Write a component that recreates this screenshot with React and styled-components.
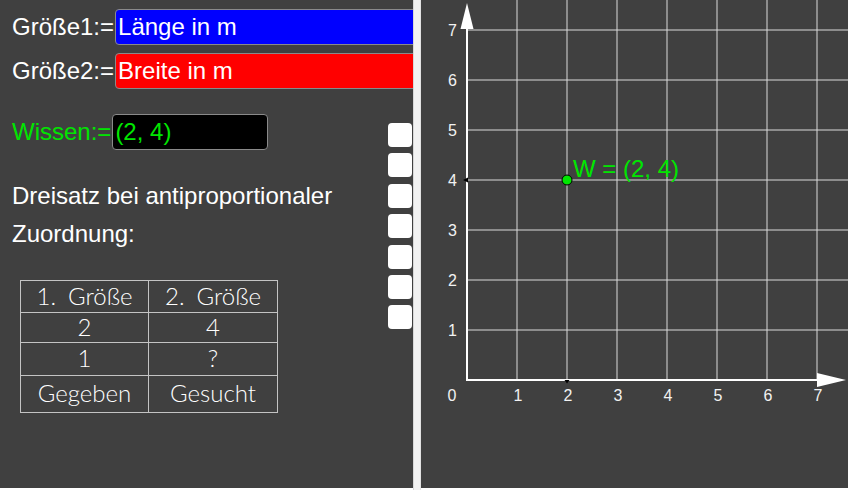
import styled, { createGlobalStyle } from 'styled-components';

const GlobalStyle = createGlobalStyle`
  html, body {
    margin: 0;
    padding: 0;
    background: #ffffff;
  }
  body {
    font-family: "Liberation Sans", Arial, sans-serif;
  }
`;

const Page = styled.div`
  display: flex;
  width: 850px;
  height: 490px;
  background: #ffffff;
`;

const LeftPanel = styled.div`
  width: 413px;
  height: 488px;
  background: #404040;
  overflow: hidden;
  display: flex;
  flex-direction: column;
  padding-top: 9px;
  box-sizing: border-box;
`;

const Separator = styled.div`
  width: 8px;
  height: 490px;
  background: #f2f2f2;
  border-left: 1px solid #d8d8d8;
  border-right: 1px solid #e2e2e2;
  box-sizing: border-box;
`;

const GraphPanel = styled.div`
  width: 427px;
  height: 488px;
  background: #404040;
`;

const FieldRow = styled.div`
  display: flex;
  align-items: center;
  height: 36px;
  padding-left: 12px;
  margin-bottom: ${({ $gap }) => $gap || 0}px;
`;

const Label = styled.span`
  font-size: 24px;
  color: ${({ $color }) => $color || '#ffffff'};
  white-space: nowrap;
  margin-right: ${({ $space }) => $space ?? 1}px;
`;

const InputBox = styled.div`
  height: 36px;
  box-sizing: border-box;
  border: 1px solid #8a8a8a;
  border-radius: 4px;
  background: ${({ $bg }) => $bg};
  color: ${({ $color }) => $color || '#ffffff'};
  font-size: 24px;
  display: flex;
  align-items: center;
  padding-left: 2px;
  white-space: nowrap;
  ${({ $width }) => ($width ? `width: ${$width}px;` : 'flex: 1; margin-right: -8px;')}
`;

const Lower = styled.div`
  display: flex;
  margin-top: 25px;
`;

const Content = styled.div`
  flex: 1;
  display: flex;
  flex-direction: column;
  align-items: flex-start;
`;

const Heading = styled.p`
  margin: 27px 0 0 12px;
  font-size: 24px;
  line-height: 38px;
  color: #ffffff;
`;

const Table = styled.table`
  margin: 27px 0 0 20px;
  border-collapse: collapse;
  table-layout: fixed;
  width: 257px;
  font-family: Lato, "Open Sans", sans-serif;
  font-weight: 300;
  font-size: 24px;
  color: #ffffff;
  td {
    border: 1.5px solid #c4c4c4;
    text-align: center;
    padding: 0 0 2px;
    line-height: 1;
    box-sizing: border-box;
  }
`;

const Cell = styled.td`
  width: ${({ $w }) => $w}px;
  height: ${({ $h }) => $h}px;
`;

const CheckColumn = styled.div`
  display: flex;
  flex-direction: column;
  gap: 6.4px;
  padding-top: 9px;
  width: 25px;
`;

const CheckBox = styled.div`
  width: 24px;
  height: 24px;
  border-radius: 4px;
  background: #ffffff;
`;

const rows = [
  { h: 32, cells: ['1.\u2002Größe', '2.\u2002Größe'] },
  { h: 30, cells: ['2', '4'] },
  { h: 33, cells: ['1', '?'] },
  { h: 37, cells: ['Gegeben', 'Gesucht'] },
];

function Graph() {
  const ox = 46;
  const oy = 380;
  const u = 50;
  const ks = [1, 2, 3, 4, 5, 6, 7];
  const grid = '#dadada';
  const label = { fill: '#f2f2f2', fontSize: 16, fontFamily: '"Liberation Sans", Arial, sans-serif' };
  return (
    <svg width="427" height="488" viewBox="0 0 427 488">
      {ks.map((k) => (
        <line key={`v${k}`} x1={ox + k * u} y1="0" x2={ox + k * u} y2={oy} stroke={grid} strokeWidth="1" />
      ))}
      {ks.map((k) => (
        <line key={`h${k}`} x1={ox} y1={oy - k * u} x2="427" y2={oy - k * u} stroke={grid} strokeWidth="1" />
      ))}
      <line x1={ox} y1="28" x2={ox} y2={oy + 1} stroke="#ffffff" strokeWidth="2" />
      <polygon points={`${ox},3 ${ox - 6.5},29 ${ox + 6.5},29`} fill="#ffffff" />
      <line x1={ox - 1} y1={oy} x2="397" y2={oy} stroke="#ffffff" strokeWidth="2" />
      <polygon points={`425,${oy} 396,${oy - 7} 396,${oy + 7}`} fill="#ffffff" />
      {ks.map((k) => (
        <text key={`yl${k}`} x="36" y={oy - k * u + 6} textAnchor="end" {...label}>{k}</text>
      ))}
      <text x="31" y="401" textAnchor="middle" {...label}>0</text>
      {ks.map((k) => (
        <text key={`xl${k}`} x={ox + k * u + 1} y="401" textAnchor="middle" {...label}>{k}</text>
      ))}
      <polygon points={`${ox - 4},180 ${ox + 1},177.5 ${ox + 1},182.5`} fill="#000000" />
      <polygon points={`${ox + 2 * u - 2.5},${oy} ${ox + 2 * u + 2.5},${oy} ${ox + 2 * u},${oy + 3.5}`} fill="#000000" />
      <circle cx={ox + 2 * u} cy="180" r="5" fill="#00e600" stroke="#000000" strokeWidth="1" />
      <text x="152" y="177" fill="#00e600" fontSize="24" fontFamily='"Liberation Sans", Arial, sans-serif'>W = (2, 4)</text>
    </svg>
  );
}

export default function App() {
  return (
    <>
      <GlobalStyle />
      <Page>
        <LeftPanel>
          <FieldRow $gap={8}>
            <Label>Größe1:=</Label>
            <InputBox $bg="#0000ff">Länge in m</InputBox>
          </FieldRow>
          <FieldRow>
            <Label>Größe2:=</Label>
            <InputBox $bg="#ff0000">Breite in m</InputBox>
          </FieldRow>
          <Lower>
            <Content>
              <FieldRow>
                <Label $color="#00e600">Wissen:=</Label>
                <InputBox $bg="#000000" $color="#00e600" $width={156}>(2, 4)</InputBox>
              </FieldRow>
              <Heading>
                Dreisatz bei antiproportionaler
                <br />
                Zuordnung:
              </Heading>
              <Table>
                <tbody>
                  {rows.map((r, i) => (
                    <tr key={i}>
                      <Cell $w={128} $h={r.h}>{r.cells[0]}</Cell>
                      <Cell $w={129} $h={r.h}>{r.cells[1]}</Cell>
                    </tr>
                  ))}
                </tbody>
              </Table>
            </Content>
            <CheckColumn>
              {[0, 1, 2, 3, 4, 5, 6].map((i) => (
                <CheckBox key={i} />
              ))}
            </CheckColumn>
          </Lower>
        </LeftPanel>
        <Separator />
        <GraphPanel>
          <Graph />
        </GraphPanel>
      </Page>
    </>
  );
}
